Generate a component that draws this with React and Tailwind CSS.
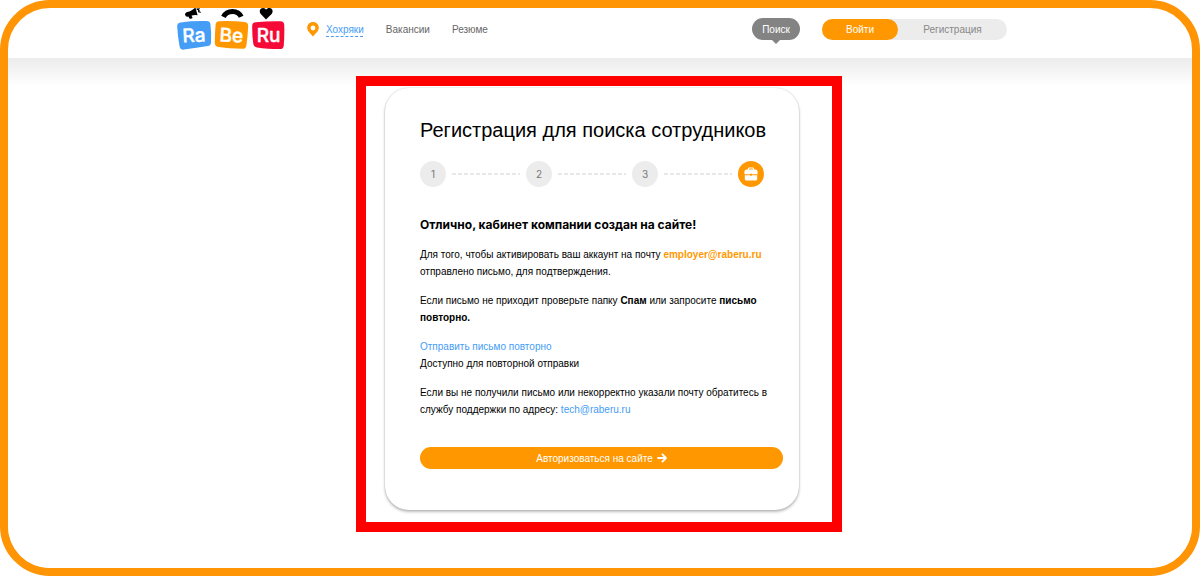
import React from "react";

const Logo = () => (
  <svg width="108" height="42" viewBox="0 0 108 42" role="img" aria-label="RaBeRu" className="block font-['Inter',sans-serif]">
    <path d="M8 6.6 Q7.8 5 9.6 4.2 L13 3.2 Q16 2 18.4 -.6 L20.6 7.2 Q17.4 6.6 14.6 7.6 L15.6 10 Q14 11.4 12.4 10.4 L11.4 8.6 Q8.6 9.4 8 6.6Z" fill="#000" />
    <path d="M19.6 1 Q22.6 1 21.8 4.4" fill="none" stroke="#000" strokeWidth="1.6" />
    <path d="M21.6 .6 L22.6 -.2 M22.6 4 L23.6 4.6" stroke="#000" strokeWidth="1.2" />
    <path d="M46.4 8.8 C50 1.6 61 1.6 64.2 8.8" fill="none" stroke="#000" strokeWidth="5" />
    <path d="M89 11.5 L83.8 6 C81.5 3 83.5 0 86 0 C87.5 0 88.6 .8 89 1.8 C89.8 .6 91 0 92.4 0 C95.2 0 96.8 3.2 94.6 6 Z" fill="#000" />
    <path d="M3.5 14.4 Q16 12.6 29.5 13 Q33 13 33.4 16 Q34.6 25 34 34.4 Q33.8 37.6 30.8 38 Q20 39.6 7 41.6 Q3.4 42 2.6 38.4 Q.6 28 .2 18.4 Q0 15 3.5 14.4Z" fill="#459df5" />
    <path d="M42 13.2 Q55 12.6 67.6 14 Q71.4 14.4 71.2 18 Q70.8 28 69.4 37.4 Q68.8 41 65.4 40.8 Q52 40.6 41.4 39 Q38 38.4 37.8 35 Q37.8 25 38.6 16.4 Q39 13.4 42 13.2Z" fill="#ff9800" />
    <path d="M78.6 14.2 Q90 13 103.6 13.2 Q107 13.4 107.2 16.6 Q107.6 27 106.8 37.4 Q106.4 41 103 41 Q90 41 80 39.4 Q76.6 39 76.2 35.6 Q75 26 75.2 17.4 Q75.4 14.6 78.6 14.2Z" fill="#f50a37" />
    <g fill="#fff" stroke="#fff" strokeWidth=".4" strokeLinejoin="round" fontSize="19" fontWeight="500" textAnchor="middle">
      <text x="17" y="34" transform="rotate(-3 17 28)">Ra</text>
      <text x="54.5" y="34" transform="rotate(3 54 28)">Be</text>
      <text x="91.5" y="34">Ru</text>
    </g>
  </svg>
);

const Pin = () => (
  <svg width="12" height="15" viewBox="0 0 12 15" aria-hidden="true">
    <path fillRule="evenodd" fill="#ff9800" d="M6 0 C2.6 0 .2 2.5 .2 5.8 C.2 9 3 11 6 14.6 C9 11 11.8 9 11.8 5.8 C11.8 2.5 9.4 0 6 0Z M6 3.6 A2.4 2.4 0 1 1 6 8.4 A2.4 2.4 0 1 1 6 3.6Z" />
  </svg>
);

const Briefcase = () => (
  <svg width="14" height="14" viewBox="0 0 14 14" aria-hidden="true">
    <path d="M4.5 3 V1.8 Q4.5 1 5.3 1 H8.7 Q9.5 1 9.5 1.8 V3" fill="none" stroke="#fff" strokeWidth="1.2" />
    <path fill="#fff" d="M2.4 2.6 H11.6 Q13.6 2.8 13.6 4.8 V7.2 H8 V6.8 H6 V7.2 H.4 V4.8 Q.4 2.8 2.4 2.6Z" />
    <path fill="#fff" d="M.8 8.2 H6.2 L7 9.4 L7.8 8.2 H13.2 V12 Q13.2 13.6 11.8 13.6 H2.2 Q.8 13.6 .8 12Z" />
  </svg>
);

const ArrowRight = () => (
  <svg width="10" height="10" viewBox="0 0 10 10" aria-hidden="true" fill="none" stroke="#fff" strokeWidth="1.8" strokeLinecap="round" strokeLinejoin="round">
    <path d="M1 5 H9 M5.4 1.4 L9 5 L5.4 8.6" />
  </svg>
);

const Step = ({ children }) => (
  <li className="flex size-[26px] shrink-0 items-center justify-center rounded-full bg-[#ececec] font-['Inter',sans-serif] text-[10px] text-[#777]">{children}</li>
);

const Dashes = () => (
  <li aria-hidden="true" className="mx-[6px] h-[2px] flex-1 bg-[repeating-linear-gradient(90deg,#e8e8e8_0_4px,transparent_4px_6px)]" />
);

export default function App() {
  return (
    <div className="min-h-screen overflow-hidden rounded-[50px] border-8 border-[#ff9505] bg-white font-['Liberation_Sans',sans-serif] text-[10px] leading-[17px] text-black">
      <header className="h-[50px] pr-4">
        <div className="mx-auto flex max-w-[830px] items-start">
          <a href="#home" aria-label="RaBeRu">
            <Logo />
          </a>
          <nav className="ml-[22px] flex h-[42px] items-center text-[#666]">
            <Pin />
            <a href="#city" className="ml-[7px] text-[#459df5] underline decoration-dashed decoration-1 underline-offset-[3px]">Хохряки</a>
            <a href="#vacancies" className="ml-[22px]">Вакансии</a>
            <a href="#resumes" className="ml-[22px]">Резюме</a>
          </nav>
          <div className="ml-auto flex h-[42px] items-center">
            <button type="button" className="relative mr-[22px] h-[22px] w-12 rounded-full bg-[#838383] text-white">
              Поиск
              <span className="absolute top-[22px] left-[20px] border-x-4 border-t-4 border-x-transparent border-t-[#838383]" />
            </button>
            <div className="flex h-[21px] rounded-full bg-[#ececec]">
              <button type="button" className="w-[76px] rounded-full bg-[#ff9800] text-white">Войти</button>
              <button type="button" className="w-[109px] text-[#888]">Регистрация</button>
            </div>
          </div>
        </div>
      </header>

      <main className="bg-[linear-gradient(#ececec,#f1f1f1_8px,#ffffff_28px)] pt-[18px] pr-[18px] pb-9 pl-4">
        <div className="mx-auto max-w-[486px] border-10 border-[#ff0000] bg-white pt-[2px] pr-[33px] pb-[12px] pl-[19px]">
          <section className="rounded-[24px] bg-white pt-[28px] pr-[16px] pb-[41px] pl-[35px] shadow-[0_2px_3px_rgba(0,0,0,0.25),0_0_2px_rgba(0,0,0,0.2)]">
            <h1 className="text-[20px] leading-[28px]">Регистрация для поиска сотрудников</h1>
            <ol className="mt-[17px] mr-[19px] flex items-center">
              <Step>1</Step>
              <Dashes />
              <Step>2</Step>
              <Dashes />
              <Step>3</Step>
              <Dashes />
              <li className="flex size-[26px] shrink-0 items-center justify-center rounded-full bg-[#ff9800]">
                <Briefcase />
              </li>
            </ol>
            <h2 className="mt-[28px] font-['Inter',sans-serif] text-[12px] leading-[20px] font-bold">Отлично, кабинет компании создан на сайте!</h2>
            <div className="mt-[11px] flex flex-col gap-3">
              <p>
                Для того, чтобы активировать ваш аккаунт на почту <b className="text-[#ff9800]">employer@raberu.ru</b>
                <br />
                отправлено письмо, для подтверждения.
              </p>
              <p>
                Если письмо не приходит проверьте папку <b>Спам</b> или запросите <b>письмо<br />повторно.</b>
              </p>
              <p>
                <a href="#resend" className="text-[#459df5]">Отправить письмо повторно</a>
                <br />
                Доступно для повторной отправки
              </p>
              <p>
                Если вы не получили письмо или некорректно указали почту обратитесь в
                <br />
                службу поддержки по адресу: <a href="mailto:tech@raberu.ru" className="text-[#459df5]">tech@raberu.ru</a>
              </p>
            </div>
            <button type="button" className="mt-[29px] flex h-[22px] w-full items-center justify-center gap-1 rounded-full bg-[#ff9800] text-white">
              Авторизоваться на сайте
              <ArrowRight />
            </button>
          </section>
        </div>
      </main>
    </div>
  );
}
